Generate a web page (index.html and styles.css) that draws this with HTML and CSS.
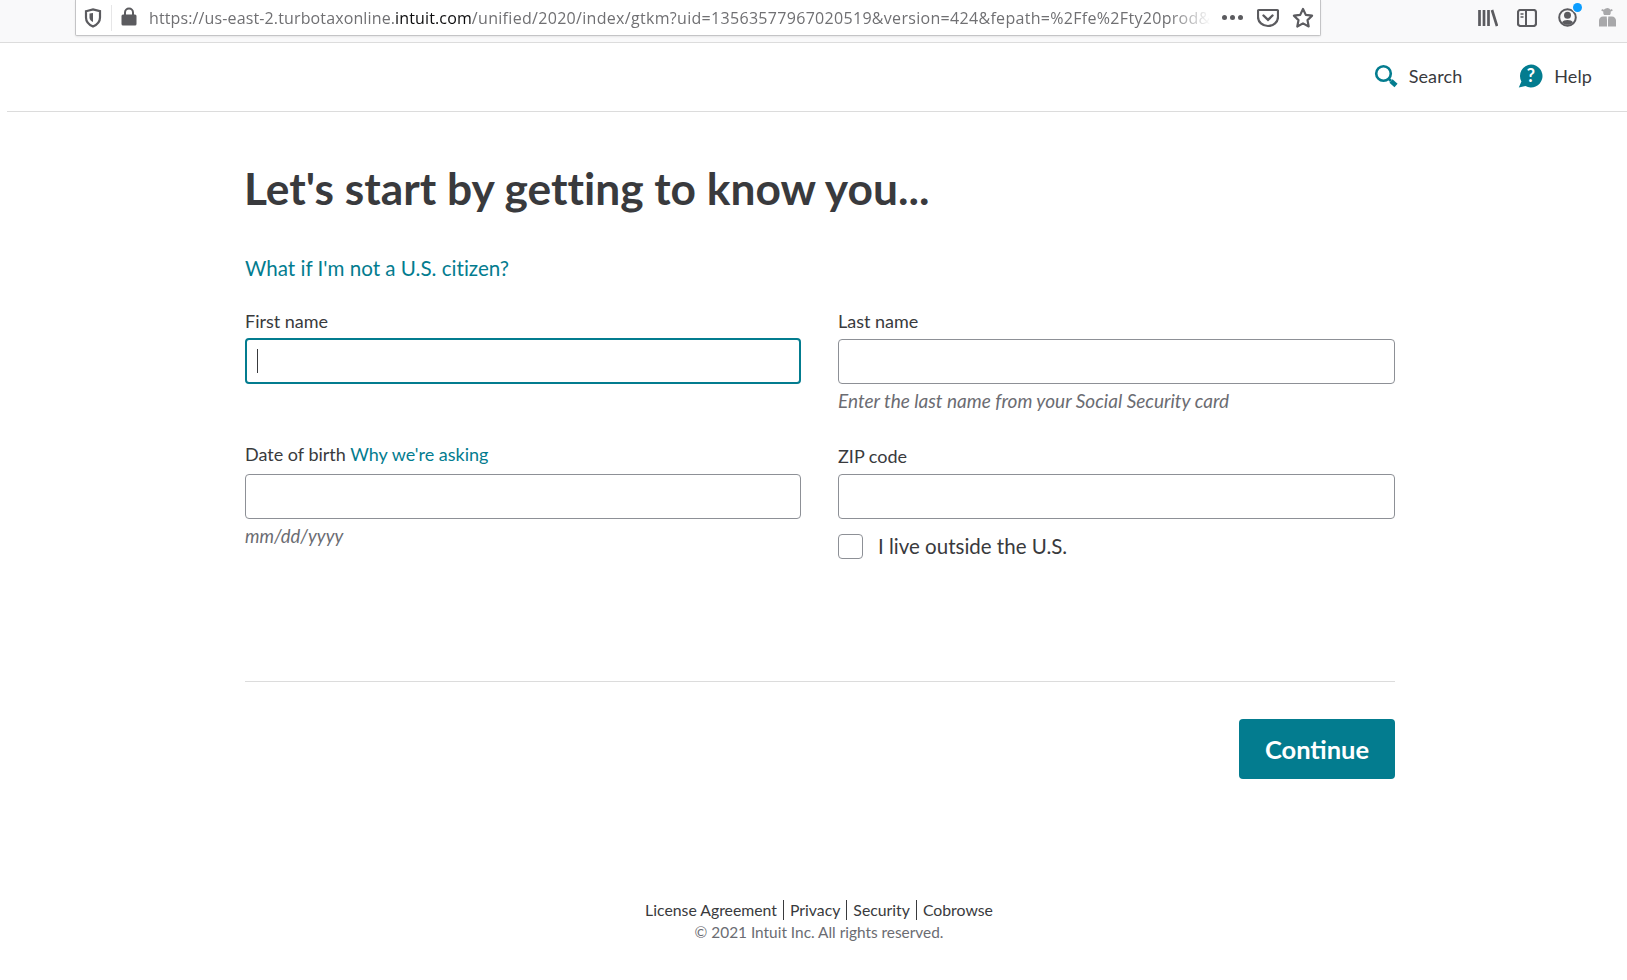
FILE: index.html
```html
<!DOCTYPE html>
<html lang="en">
<head>
<meta charset="utf-8">
<title>TurboTax</title>
<link rel="stylesheet" href="styles.css">
</head>
<body>
<div class="browser">
  <div class="urlbar">
    <svg class="ico" width="18" height="20" viewBox="0 0 18 20"><path d="M2 3.200 9 1.500l7 1.700v6.300c0 4.300-3 7.300-7 9-4-1.700-7-4.700-7-9z" fill="none" stroke="#5b5b5f" stroke-width="2.200"/><path d="M5.500 5.500 9 4.900v9.200c-2-1-3.500-2.600-3.500-4.600z" fill="#5b5b5f"/></svg>
    <span class="sep"></span>
    <svg class="ico lock" width="16" height="19" viewBox="0 0 16 19"><path d="M4 8V5.500a4 4 0 0 1 8 0V8" fill="none" stroke="#5b5b5f" stroke-width="2"/><rect x="0.500" y="7.500" width="15" height="11" rx="1.500" fill="#5b5b5f"/></svg>
    <div class="url">https://us-east-2.turbotaxonline.<b>intuit.com</b><span class="rest">/unified/2020/index/gtkm?uid=13563577967020519&amp;version=424&amp;fepath=%2Ffe%2Fty20prod&amp;</span></div>
    <span class="dots"><i></i><i></i><i></i></span>
    <svg class="ico" width="22" height="20" viewBox="0 0 22 20"><path d="M2 2h18a1 1 0 0 1 1 1v6c0 5-4.500 9-10 9S1 14 1 9V3a1 1 0 0 1 1-1z" fill="none" stroke="#5b5b5f" stroke-width="2.200"/><path d="m6.500 7.500 4.500 4.300 4.500-4.300" fill="none" stroke="#5b5b5f" stroke-width="2.400" stroke-linecap="round"/></svg>
    <svg class="ico star" width="22" height="21" viewBox="0 0 22 21"><path d="m11 2 2.800 5.900 6.300.8-4.600 4.400 1.200 6.400L11 16.400l-5.700 3.100 1.200-6.400-4.600-4.400 6.300-.8z" fill="none" stroke="#5b5b5f" stroke-width="2.200" stroke-linejoin="round"/></svg>
  </div>
  <div class="tools">
    <svg width="20" height="18" viewBox="0 0 20 18"><path d="M1.500 1v16M6 1v16M10.500 1v16M14 1l5 16" fill="none" stroke="#5b5b5f" stroke-width="2.700"/></svg>
    <svg class="panel" width="20" height="18" viewBox="0 0 20 18"><rect x="1" y="1" width="18" height="16" rx="2.500" fill="none" stroke="#5b5b5f" stroke-width="2.200"/><path d="M9 1v16" stroke="#5b5b5f" stroke-width="2"/><path d="M3.500 5h3M3.500 8h3" stroke="#5b5b5f" stroke-width="1.500"/></svg>
    <span class="acct">
      <svg width="19" height="19" viewBox="0 0 19 19"><circle cx="9.500" cy="9.500" r="8.300" fill="none" stroke="#5b5b5f" stroke-width="2"/><circle cx="9.500" cy="7.300" r="3.500" fill="#5b5b5f"/><path d="M4 14.500c1-2 3-2.600 5.500-2.600s4.500.6 5.500 2.600c-1.500 1.500-3.400 2.300-5.500 2.300S5.500 16 4 14.500z" fill="#5b5b5f"/></svg>
      <span class="badge"></span>
    </span>
    <svg class="ext" width="17" height="19" viewBox="0 0 17 19"><path d="M8.500 0c1.300 0 2.300.7 2.700 1.800l1.800-.8.700 1.700-2 .9v1.400c0 .8-.3 1.500-.8 2.100H5.100c-.5-.6-.8-1.300-.8-2.100V3.600l-2-.9.700-1.700 1.800.8C6.200.7 7.200 0 8.500 0z" fill="#a8a8aa"/><path d="M4 8.500h3.700L8 12v6.500H0v-6c0-2 1.800-4 4-4zM13 8.500H9.300L9 12v6.500h8v-6c0-2-1.800-4-4-4z" fill="#a8a8aa"/></svg>
  </div>
</div>

<header class="apphead">
  <a class="headlink">
    <svg width="24" height="24" viewBox="0 0 24 24"><circle cx="9.500" cy="9.500" r="7.300" fill="none" stroke="#037c8f" stroke-width="2.600"/><path d="m15 15 2 2" stroke="#037c8f" stroke-width="2.600"/><path d="m17 17 5 4.500" stroke="#037c8f" stroke-width="4.600"/></svg>
    <span>Search</span>
  </a>
  <a class="headlink">
    <svg width="25" height="24" viewBox="0 0 25 24"><path d="M13 .5a11.500 11.500 0 1 1-5.500 21.600L.8 23.500l2.600-6A11.500 11.500 0 0 1 13 .5z" fill="#037c8f"/><text x="13" y="18" text-anchor="middle" class="qmark">?</text></svg>
    <span>Help</span>
  </a>
</header>

<main class="page">
  <h1>Let's start by getting to know you...</h1>
  <a class="citizen">What if I'm not a U.S. citizen?</a>
  <form class="grid">
    <div class="field first">
      <label>First name</label>
      <div class="input focus"><span class="caret"></span></div>
    </div>
    <div class="field first">
      <label>Last name</label>
      <div class="input"></div>
      <p class="hint long">Enter the last name from your Social Security card</p>
    </div>
    <div class="field second">
      <label class="dob">Date of birth <a>Why we're asking</a></label>
      <div class="input"></div>
      <p class="hint">mm/dd/yyyy</p>
    </div>
    <div class="field second">
      <label class="zip">ZIP code</label>
      <div class="input"></div>
      <div class="check"><span class="box"></span><span>I live outside the U.S.</span></div>
    </div>
  </form>
  <div class="actions">
    <button type="button" class="continue">Continue</button>
  </div>
</main>

<footer class="foot">
  <div class="links"><a>License Agreement</a><a>Privacy</a><a>Security</a><a>Cobrowse</a></div>
  <div class="copy">© 2021 Intuit Inc. All rights reserved.</div>
</footer>
</body>
</html>
```
FILE: styles.css
```css
* { box-sizing: border-box; }
html, body { margin: 0; padding: 0; height: 100%; }
body { background: #fff; color: #393a3d; font-family: Lato, "Noto Sans", sans-serif; font-variant-ligatures: none; overflow: hidden; }

.browser { height: 43px; background: #f9f9fa; border-bottom: 1px solid #dcdcdc; display: flex; align-items: flex-start; padding-left: 75px; }
.urlbar { width: 1246px; height: 36px; background: #fff; border: 1px solid #c4c4c6; border-top: 0; border-radius: 0 0 2px 2px; box-shadow: 0 1px 2px rgba(0,0,0,.08); display: flex; align-items: center; padding: 0 6px 0 8px; }
.ico { flex: none; }
.sep { width: 1px; height: 26px; background: #e6e6e7; margin: 0 9px 0 9px; }
.lock { margin-right: 12px; margin-top: -2px; }
.url { flex: 1; min-width: 0; padding-top: 1px; white-space: nowrap; overflow: hidden; font: 16px/24px "Open Sans", sans-serif; letter-spacing: .13px; color: #707073; -webkit-mask-image: linear-gradient(to right, #000 96%, transparent); mask-image: linear-gradient(to right, #000 96%, transparent); }
.url b { font-weight: 400; color: #0c0c0d; }
.rest { letter-spacing: .31px; }
.dots { display: flex; gap: 3px; margin: 0 14px 0 11px; }
.dots i { width: 5px; height: 5px; border-radius: 50%; background: #5b5b5f; }
.star { margin-left: 13px; }
.tools { flex: 1; display: flex; align-items: center; gap: 20px; height: 35px; padding-left: 157px; }
.panel { margin-left: -1px; margin-right: 1px; }
.ext { margin-left: 2px; }
.acct { display: flex; position: relative; }
.badge { position: absolute; top: -5px; right: -5px; width: 9px; height: 9px; border-radius: 50%; background: #0a9dff; box-shadow: 0 0 0 1px #f9f9fa; }

.apphead { height: 69px; margin-left: 7px; border-bottom: 1px solid #dcdcdc; display: flex; justify-content: flex-end; align-items: center; padding: 0 35px 2px 0; gap: 56px; }
.headlink { display: flex; align-items: center; gap: 11px; font-size: 18px; letter-spacing: .1px; color: #393a3d; }
.qmark { font: 700 18px Lato, sans-serif; fill: #fff; }

.page { margin: 0 232px 0 245px; }
h1 { margin: 0 0 0 -1px; padding-top: 46px; font-size: 44.300px; line-height: 60px; font-weight: 700; color: #393a3d; }
.citizen { display: block; margin-top: 36px; font-size: 20.600px; line-height: 28px; color: #037c8f; }
a { color: #037c8f; }

.grid { display: grid; grid-template-columns: 556px 557px; column-gap: 37px; margin-top: 28px; }
.field { display: flex; flex-direction: column; }
.field.first { height: 133px; }
.field.second { height: 238px; }
label { font-size: 18px; line-height: 22px; height: 29px; color: #393a3d; }
.field.second label { height: 31px; }
.zip { padding-top: 2px; }
.input { height: 45px; background: #fff; border: 1px solid #8d9096; border-radius: 4px; display: flex; align-items: center; padding-left: 10px; }
.input.focus { height: 46px; margin-top: -1px; border: 2px solid #037c8f; }
.caret { width: 1px; height: 24px; background: #393a3d; }
.hint { margin: 6px 0 0; font-size: 18.400px; line-height: 22px; font-style: italic; color: #6b6c72; }
.hint.long { font-size: 19px; }
.check { display: flex; align-items: center; margin-top: 15px; font-size: 20.500px; line-height: 25px; }
.box { width: 25px; height: 25px; border: 1px solid #8d9096; border-radius: 4px; margin-right: 15px; }

.actions { border-top: 1px solid #dcdcdc; padding-top: 37px; display: flex; justify-content: flex-end; }
.continue { width: 156px; height: 60px; border: 0; border-radius: 4px; background: #037c8f; color: #fff; font: 700 25.500px Lato, sans-serif; padding-bottom: 2px; }

.foot { margin-top: 121px; margin-left: 11px; text-align: center; font-size: 15.800px; }
.links { display: flex; justify-content: center; line-height: 20px; }
.links a { color: #393a3d; padding: 0 6px; border-left: 1px solid #393a3d; }
.links a:first-child { border-left: 0; }
.copy { margin-top: 2px; font-size: 15.400px; line-height: 20px; color: #6b6c72; }
```
